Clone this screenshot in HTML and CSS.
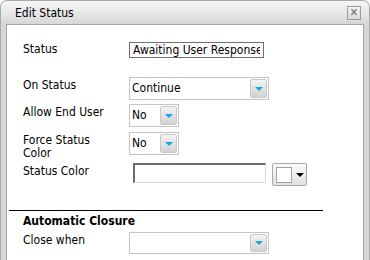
FILE: index.html
```html
<!DOCTYPE html>
<html lang="en">
<head>
  <meta charset="UTF-8">
  <title>Edit Status</title>
  <link rel="stylesheet" href="styles.css">
</head>
<body>
  <div class="dialog">
    <div class="titlebar">
      <span class="title">Edit Status</span>
      <span class="close">&#x2715;</span>
    </div>
    <div class="body">
      <div class="row row-status">
        <label class="label">Status</label>
        <input class="text" type="text" value="Awaiting User Response">
      </div>
      <div class="row row-on">
        <label class="label">On Status</label>
        <div class="select wide"><span class="value">Continue</span><span class="arrow"></span></div>
      </div>
      <div class="row row-allow">
        <label class="label">Allow End User</label>
        <div class="select small"><span class="value">No</span><span class="arrow"></span></div>
      </div>
      <div class="row row-force">
        <label class="label">Force Status<br>Color</label>
        <div class="select small"><span class="value">No</span><span class="arrow"></span></div>
      </div>
      <div class="row row-color">
        <label class="label">Status Color</label>
        <input class="color-text" type="text">
        <div class="picker"><span class="swatch"></span><span class="caret"></span></div>
      </div>
      <div class="divider"></div>
      <div class="section">Automatic Closure</div>
      <div class="row row-close">
        <label class="label">Close when</label>
        <div class="select wide"><span class="value"></span><span class="arrow"></span></div>
      </div>
    </div>
  </div>
</body>
</html>
```

FILE: styles.css
```css
* { margin: 0; padding: 0; box-sizing: border-box; }
body {
  font-family: "DejaVu Sans Condensed", "DejaVu Sans", sans-serif;
  background-color: #ffffff;
  color: #000;
}
.dialog {
  width: 370px;
  height: 260px;
  background: #d6d6d6;
  border: 1px solid #a9a9a9;
  border-bottom: none;
  border-radius: 7px 7px 0 0;
  overflow: hidden;
  display: flex;
  flex-direction: column;
}
.titlebar {
  height: 23px;
  background: linear-gradient(#f6f6f6 0%, #e4e4e4 60%, #d6d6d6 100%);
  display: flex;
  align-items: center;
  justify-content: space-between;
  padding: 0 8px 0 14px;
}
.title {
  font-size: 12px;
}
.close {
  width: 14px;
  height: 14px;
  border: 1px solid #9a9a9a;
  background: linear-gradient(#f4f4f4, #d8d8d8);
  color: #6a6a6a;
  font-size: 11px;
  line-height: 12px;
  text-align: center;
  font-weight: bold;
}
.body {
  flex: 1;
  margin: 0 5px;
  background: #ffffff;
  border: 1px solid #a4a4a4;
  border-bottom: none;
  padding: 0 0 0 16px;
}
.row {
  display: flex;
  align-items: flex-start;
}
.label {
  width: 106px;
  font-size: 12px;
  line-height: 13px;
  flex-shrink: 0;
}
.row-status { margin-top: 17px; }
.row-status .label { padding-top: 1px; }
.text {
  width: 135px;
  height: 16px;
  border: 1px solid #707070;
  font-family: inherit;
  font-size: 12px;
  padding: 0 3px;
  outline: none;
}
.row-on { margin-top: 19px; }
.row-allow { margin-top: 4px; }
.row-force { margin-top: 5px; }
.row-on .label, .row-allow .label, .row-close .label { padding-top: 2px; }
.row-force .label { padding-top: 2px; }
.select {
  height: 23px;
  border: 1px solid #c4c4c4;
  display: flex;
  align-items: stretch;
  background: #fff;
}
.select.wide { width: 140px; }
.select.small { width: 50px; }
.value {
  flex: 1;
  font-size: 12px;
  line-height: 21px;
  padding-left: 2px;
}
.arrow {
  width: 17px;
  margin: 1px;
  border: 1px solid #c8c8c8;
  border-radius: 2px;
  background: linear-gradient(#f4f4f4, #d2d2d2);
  display: flex;
  align-items: center;
  justify-content: center;
}
.arrow::after {
  content: "";
  border-left: 4px solid transparent;
  border-right: 4px solid transparent;
  border-top: 4px solid #19a4ea;
}
.row-color { margin-top: 3px; }
.row-color .label { padding-top: 2px; }
.color-text {
  width: 133px;
  height: 20px;
  margin-left: 4px;
  border: 1px solid #d8d8d8;
  border-top: 2px solid #6c6c6c;
  border-left: 2px solid #6c6c6c;
  outline: none;
}
.picker {
  width: 35px;
  height: 23px;
  margin-left: 6px;
  border: 1px solid #a8a8a8;
  border-radius: 2px;
  background: linear-gradient(#fafafa, #e2e2e2);
  display: flex;
  align-items: center;
  padding-left: 3px;
  gap: 4px;
}
.swatch {
  width: 16px;
  height: 16px;
  border: 1px solid #a0a0a0;
  background: #fff;
}
.caret {
  border-left: 4px solid transparent;
  border-right: 4px solid transparent;
  border-top: 4px solid #000;
}
.divider {
  margin: 24px 0 0 -14px;
  width: 314px;
  border-top: 1px solid #000;
}
.section {
  margin-top: 4px;
  font-size: 12px;
  font-weight: bold;
  line-height: 13px;
}
.row-close { margin-top: 4px; }
.row-close .select { height: 22px; }
```
